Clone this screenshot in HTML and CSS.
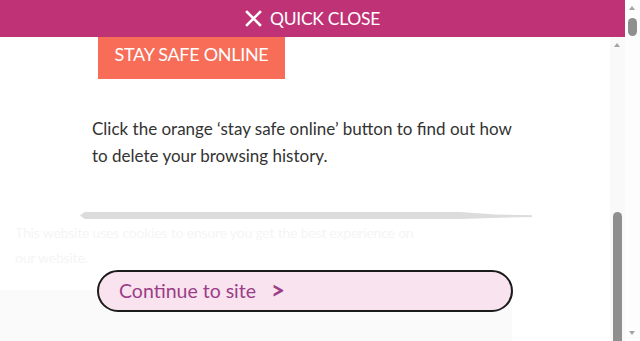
FILE: index.html
```html
<!DOCTYPE html>
<html lang="en">
<head>
<meta charset="utf-8">
<title>Stay safe online</title>
<link rel="stylesheet" href="styles.css">
</head>
<body>
<div class="window">
  <div class="page">
    <header class="quick-close">
      <svg class="qc-icon" width="17" height="17" viewBox="0 0 17 17" aria-hidden="true">
        <path d="M2 2 L15 15 M15 2 L2 15" stroke="#fff" stroke-width="2.6" stroke-linecap="square" fill="none"/>
      </svg>
      <span class="qc-label">QUICK CLOSE</span>
    </header>
    <div class="frame">
      <main class="frame-content">
        <a class="safe-btn" href="#">STAY SAFE ONLINE</a>
        <p class="intro">Click the orange ‘stay safe online’ button to find out how to delete your browsing history.</p>
        <div class="smudge"></div>
        <section class="cookie">
          <p class="cookie-text">This website uses cookies to ensure you get the best experience on our website.</p>
          <div class="cookie-actions">
            <button class="continue" type="button">Continue to site <span class="chev">&gt;</span></button>
          </div>
        </section>
      </main>
      <div class="scrollbar inner-bar">
        <span class="arrow-up"></span>
        <span class="thumb inner-thumb"></span>
      </div>
    </div>
  </div>
  <div class="scrollbar outer-bar">
    <span class="arrow-up"></span>
    <span class="thumb outer-thumb"></span>
    <span class="arrow-down"></span>
  </div>
</div>
</body>
</html>
```

FILE: styles.css
```css
html, body {
  margin: 0;
  height: 100%;
  overflow: hidden;
  background: #fff;
  font-family: Lato, "Open Sans", sans-serif;
}
.window {
  display: flex;
  height: 341px;
}
.page {
  flex: 1;
  min-width: 0;
  display: flex;
  flex-direction: column;
}
.quick-close {
  height: 37px;
  flex: none;
  background: #bf3276;
  display: flex;
  align-items: center;
  justify-content: center;
  gap: 8px;
  color: #fff;
}
.qc-icon {
  display: block;
}
.qc-label {
  font-family: Lato, sans-serif;
  font-size: 17.5px;
  letter-spacing: -0.3px;
  line-height: 1;
  padding-top: 1px;
}
.frame {
  flex: 1;
  display: flex;
  overflow: hidden;
}
.frame-content {
  flex: 1;
  min-width: 0;
  overflow: hidden;
  display: flex;
  flex-direction: column;
  align-items: flex-start;
}
.frame-content > * {
  flex-shrink: 0;
}
.safe-btn {
  display: flex;
  align-items: center;
  justify-content: center;
  margin: -9px 0 0 98px;
  width: 187px;
  height: 51px;
  background: #f76d58;
  color: #fff;
  text-decoration: none;
  font-size: 18px;
  letter-spacing: -0.3px;
}
.intro {
  margin: 36px 0 0 92px;
  width: 428px;
  font-size: 17px;
  line-height: 27px;
  color: #333;
}
.smudge {
  margin: 43px 0 0 80px;
  width: 452px;
  height: 7px;
  background: #dcdcdc;
  clip-path: polygon(1% 0, 84% 0, 92% 35%, 100% 45%, 100% 70%, 84% 100%, 1% 100%, 0 50%);
}
.cookie {
  width: 512px;
  margin-top: 1px;
  display: flex;
  flex-direction: column;
  background: linear-gradient(to bottom, transparent 0, transparent 70px, #fafafa 70px);
  padding-bottom: 40px;
}
.cookie-text {
  margin: 0 0 0 15px;
  width: 420px;
  font-size: 14px;
  letter-spacing: -0.2px;
  line-height: 25px;
  color: #f5f5f5;
}
.cookie-actions {
  padding: 0 0 0 97px;
}
.continue {
  display: flex;
  align-items: center;
  gap: 15px;
  width: 416px;
  height: 42px;
  padding: 0 0 2px 20px;
  border: 2px solid #1b1b1b;
  border-radius: 21px;
  background: #f8e3ee;
  color: #9c3d88;
  font-family: Lato, sans-serif;
  font-size: 19.5px;
}
.chev {
  font-weight: 700;
  font-size: 24px;
  line-height: 1;
}
.scrollbar {
  position: relative;
  width: 15px;
  flex: none;
}
.inner-bar {
  background: #f9f9f9;
}
.outer-bar {
  background: #fdfdfd;
}
.arrow-up, .arrow-down {
  position: absolute;
  left: 4px;
  width: 0;
  height: 0;
  border-left: 3.5px solid transparent;
  border-right: 3.5px solid transparent;
}
.arrow-up {
  top: 6px;
  border-bottom: 4px solid #a3a3a3;
}
.arrow-down {
  bottom: 6px;
  border-top: 4px solid #a3a3a3;
}
.thumb {
  position: absolute;
  left: 3px;
  width: 9px;
  border-radius: 5px;
  background: #8f8f8f;
}
.inner-thumb {
  top: 175px;
  height: 200px;
}
.outer-thumb {
  top: 18px;
  height: 18px;
}
```
